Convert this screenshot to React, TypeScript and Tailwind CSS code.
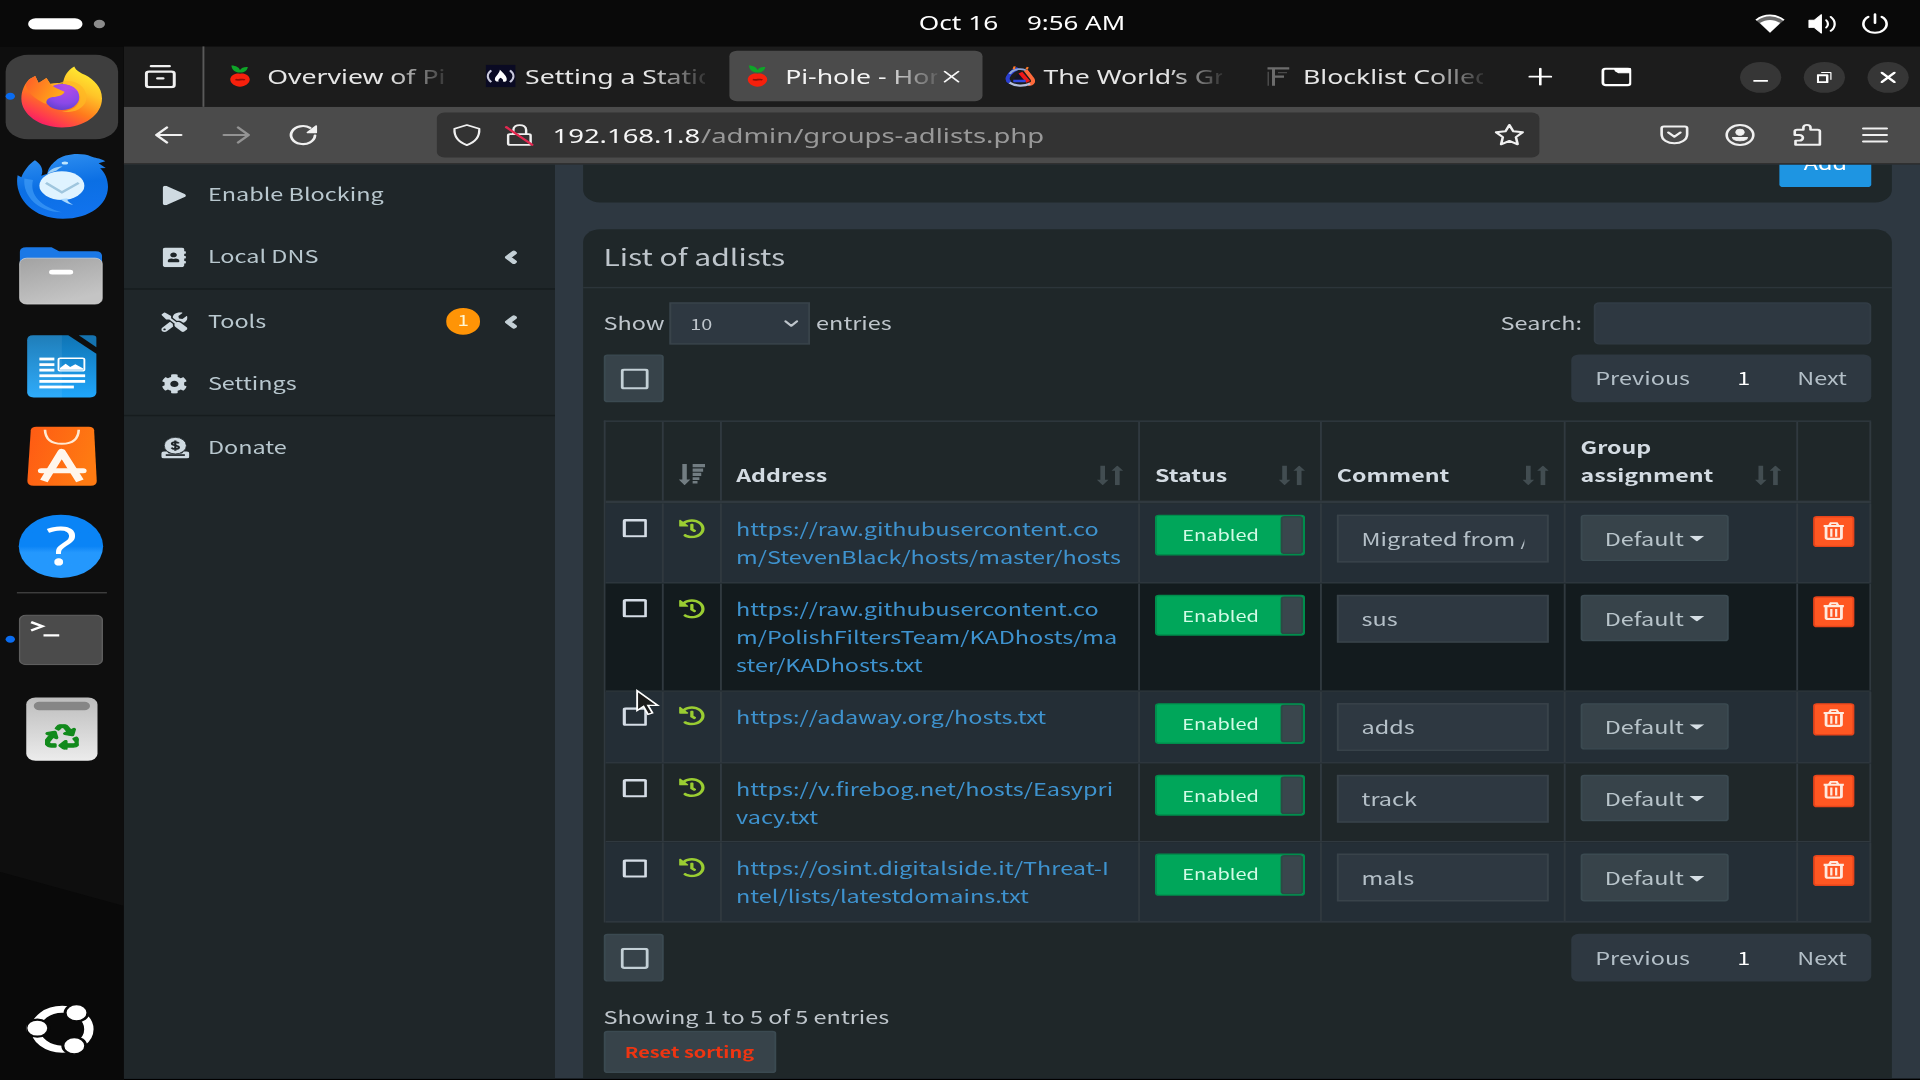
import React, { ReactNode } from "react";
import {
  FaAddressBook,
  FaAngleLeft,
  FaCog,
  FaHistory,
  FaPlay,
  FaRecycle,
  FaTools,
} from "react-icons/fa";

/* ---------- dock icons ---------- */

function Firefox() {
  return (
    <svg viewBox="0 0 44 44" className="h-11 w-11">
      <defs>
        <linearGradient id="ffBody" x1="0.85" y1="0.05" x2="0.25" y2="1">
          <stop offset="0" stopColor="#fff133" />
          <stop offset="0.3" stopColor="#ffc428" />
          <stop offset="0.6" stopColor="#ff7a1c" />
          <stop offset="0.85" stopColor="#ff3a4e" />
          <stop offset="1" stopColor="#f5156c" />
        </linearGradient>
        <linearGradient id="ffHead" x1="0" y1="0" x2="1" y2="0.4">
          <stop offset="0" stopColor="#ff5a2a" />
          <stop offset="1" stopColor="#ffab16" />
        </linearGradient>
        <radialGradient id="ffGlobe" cx="0.6" cy="0.2" r="0.9">
          <stop offset="0" stopColor="#b14be8" />
          <stop offset="0.6" stopColor="#8a48e8" />
          <stop offset="1" stopColor="#5a3ec8" />
        </radialGradient>
      </defs>
      <path
        d="M4.6 9.4 7.8 7 9.6 12 13.8 8.4 15.8 12.6C18 12 20.5 11.8 22.6 12.6 23 7 25 3 28.6.2 29.6 3.4 32 4.6 34.5 6.4 39 9.6 43.4 15 43.4 23 43.4 34.5 34 43.6 22 43.6 10 43.6.4 34.2.4 23.4.4 17.5 2 13 4.6 9.4Z"
        fill="url(#ffBody)"
      />
      <circle cx="22" cy="22" r="9.3" fill="url(#ffGlobe)" />
      <path
        d="M4.6 9.4 7.8 7 9.6 12 13.8 8.4 15.8 12.8C17.2 14.8 20 16.6 23.4 18.2 23.2 20.4 20 21.8 17 22 14.4 22.6 13.4 24.6 13.8 27 10 25 3.6 20 2.6 13Z"
        fill="url(#ffHead)"
      />
      <path
        d="M20 12.4C25 11.8 30.5 14.6 31.8 21 32.4 27 28 32 22 32 29 34.5 35.5 29 35.2 21.5 34.6 13.6 28 9.2 22.8 11Z"
        fill="#ffb824"
        opacity="0.75"
      />
      <path d="M20 13.4C25 12 29 14.5 30.8 18.6 28.6 16.8 26.6 16.4 24.4 16.6 22.8 14.8 21.6 14 20 13.4Z" fill="#b24be6" />
    </svg>
  );
}

function Thunderbird() {
  return (
    <svg viewBox="0 0 50 48" className="h-12 w-[50px]">
      <defs>
        <linearGradient id="tbBody" x1="0.3" y1="0" x2="0.5" y2="1">
          <stop offset="0" stopColor="#2f8ff0" />
          <stop offset="0.5" stopColor="#0b6fe4" />
          <stop offset="1" stopColor="#1173ee" />
        </linearGradient>
      </defs>
      <path
        d="M10.6 5C7.6 7.6 5 12 3.4 17L1.4 15.6C-.6 30 8 46.4 25.5 46.6 40 46.6 49.4 36.5 49.6 24 49.6 18 47.8 13.4 45.4 10.6L48.4 10.4 44.6 7 48.2 5.6C44.6 3 42.8 3.4 40.6 2.2 35.6-.4 26.5-.2 21.6 5.4 19.4 7.8 17.6 10.6 17.2 14.6L14 16C15.6 11.4 13.6 7.6 10.6 5Z"
        fill="url(#tbBody)"
      />
      <path d="M5 18C4 30 12 42 25 42 14 38 7.6 30 9.6 19Z" fill="#3f9bf7" opacity="0.7" />
      <path d="M17.2 14.6C19 11 22 9.4 25.4 9.4 23.4 10.6 23 11.4 22 12.4Z" fill="#9fd0f5" />
      <ellipse cx="26.6" cy="6.9" rx="1.7" ry="1.1" fill="#bfe6ff" />
      <ellipse cx="25" cy="23" rx="12" ry="10.2" fill="#dff3ff" />
      <path d="M24 32.6C27 35 29 36.4 31 36.6 28.4 34.8 27.6 33.4 28 32Z" fill="#a8d8ff" />
      <path d="M16.5 21 25 27.8 34 21" fill="none" stroke="#9fc6de" strokeWidth="1.6" />
    </svg>
  );
}

function Files() {
  return (
    <svg viewBox="0 0 45 42" className="h-[42px] w-[45px]">
      <defs>
        <linearGradient id="flG" x1="0" y1="0" x2="0.4" y2="1">
          <stop offset="0" stopColor="#a2a2a2" />
          <stop offset="1" stopColor="#c4c4c4" />
        </linearGradient>
      </defs>
      <path d="M.6 14V4Q.6.8 4 .8H17.5L21.5 3.6H41Q44.4 3.6 44.4 7V14Z" fill="#1a78e6" />
      <rect x="0.5" y="8.6" width="44" height="32.6" rx="3.8" fill="url(#flG)" stroke="#cfcfcf" strokeWidth="0.5" />
      <rect x="16.2" y="16.8" width="12.8" height="3.4" rx="1.6" fill="#fff" />
    </svg>
  );
}

function Writer() {
  return (
    <svg viewBox="0 0 38 45" className="h-[45px] w-[38px]">
      <defs>
        <linearGradient id="wrG" x1="0" y1="0" x2="0" y2="1">
          <stop offset="0" stopColor="#0f74b4" />
          <stop offset="1" stopColor="#20a6fb" />
        </linearGradient>
      </defs>
      <path d="M3.6 .4H22.4L37.4 13.6V41Q37.4 44.6 34 44.6H4Q.5 44.6.5 41V4Q.5.4 3.6.4Z" fill="url(#wrG)" />
      <path d="M.5 4Q.5.4 3.6.4H19V44.6H4Q.5 44.6.5 41Z" fill="#fff" opacity="0.07" />
      <path d="M28 .4H35.4Q37.4.4 37.4 2.4V9Z" fill="#1573b0" />
      <g fill="#fff">
        <rect x="7" y="16.3" width="8" height="2" />
        <rect x="7" y="20.3" width="8" height="2" />
        <rect x="7" y="24.2" width="8" height="2" />
        <rect x="7" y="28.2" width="24.4" height="2" />
        <rect x="7" y="32.2" width="24.4" height="2" />
        <rect x="7" y="36.2" width="18.4" height="2" />
      </g>
      <rect x="17.2" y="16.7" width="13.8" height="9" rx="1" fill="none" stroke="#fff" strokeWidth="1" />
      <path d="M18 25V23.6L21 20.6 23.4 23 26.2 21 30.4 24V25Z" fill="#fff" />
    </svg>
  );
}

function Store() {
  return (
    <svg viewBox="0 0 38 43" className="h-[43px] w-[38px]">
      <defs>
        <linearGradient id="stG" x1="0" y1="0" x2="1" y2="0.3">
          <stop offset="0" stopColor="#ff5a14" />
          <stop offset="1" stopColor="#fe7a12" />
        </linearGradient>
      </defs>
      <path d="M5.4.5H33.4Q36 .5 36.2 3L37.6 39Q37.6 42.4 34.4 42.4H4Q.6 42.4.6 39L2.4 3Q2.6.5 5.4.5Z" fill="url(#stG)" />
      <path d="M10 2.6C10.2 9.4 13.6 12.6 19 12.6S27.8 9.4 28 2.6" fill="none" stroke="#ffe9d2" strokeWidth="1.4" />
      <g stroke="#fff6ec" fill="none">
        <path d="M9.4 39 18.9 18.4 28.6 39" strokeWidth="4.4" strokeLinejoin="round" />
        <path d="M8 31.8H30.4" strokeWidth="3.6" strokeLinecap="round" />
      </g>
    </svg>
  );
}

function Help() {
  return (
    <div className="flex h-[45px] w-[45px] items-center justify-center rounded-full bg-gradient-to-b from-[#0a84f6] from-50% to-[#2498fd] to-60% font-['Noto_Sans'] text-[38px] leading-none text-white">
      <span className="-mt-0.5">?</span>
    </div>
  );
}

function Terminal() {
  return (
    <svg viewBox="0 0 45 36" className="h-9 w-[45px]">
      <rect x="0.4" y="0.4" width="44.2" height="35.2" rx="3.6" fill="#4b4b4b" stroke="#5e5e5e" strokeWidth="0.8" />
      <path d="M6.6 5.4 12.6 8.4 6.6 11.4" fill="none" stroke="#fff" strokeWidth="1.6" />
      <path d="M13.2 14.8H21.6" stroke="#fff" strokeWidth="1.5" />
    </svg>
  );
}

function Trash() {
  return (
    <div className="flex h-[45px] w-[37.5px] flex-col items-center rounded-[5px] bg-gradient-to-b from-[#bdbdbd] to-[#ececec] pt-[3px] text-[#128a1c]">
      <div className="h-[6px] w-[30.5px] rounded-[3px] bg-[#868686]" />
      <FaRecycle className="mt-[9.6px] size-[18.6px]" stroke="currentColor" strokeWidth={24} />
    </div>
  );
}

function UbuntuLogo() {
  return (
    <svg viewBox="0 0 38 36" className="h-9 w-[38px]">
      <circle cx="19.2" cy="17.9" r="14.2" fill="none" stroke="#fff" strokeWidth="5" />
      <g fill="#fff" stroke="#090909" strokeWidth="1.6">
        <circle cx="5.9" cy="17.1" r="6.1" />
        <circle cx="26.8" cy="6.2" r="6.1" />
        <circle cx="25.6" cy="29.6" r="6.1" />
      </g>
    </svg>
  );
}

/* ---------- browser icons ---------- */

function Line({
  children,
  className = "",
  size = "size-4",
  w = 1.3,
}: {
  children: ReactNode;
  className?: string;
  size?: string;
  w?: number;
}) {
  return (
    <svg
      viewBox="0 0 16 16"
      className={`${size} shrink-0 ${className}`}
      fill="none"
      stroke="currentColor"
      strokeWidth={w}
      strokeLinecap="round"
      strokeLinejoin="round"
    >
      {children}
    </svg>
  );
}

function Berry() {
  return (
    <svg viewBox="0 0 16 16" className="size-4 shrink-0">
      <path d="M8 5.6C5.8 5.8 3.6 4 3.4.6 6 .6 7.6 2.2 8 3.8 8.8 2.2 10 1.4 12.2 1.6 11.8 4.4 10 5.8 8 5.6Z" fill="#0ea528" />
      <path d="M8 6.4C10.6 5.8 13.2 7.8 13.2 10.6 13.2 13.2 10.8 15.6 8 15.6S2.8 13.2 2.8 10.6C2.8 7.8 5.4 5.8 8 6.4Z" fill="#f6200c" />
      <path d="M5.6 10.4C7 11.6 9 9.8 10.6 10.8" fill="none" stroke="#8d0f08" strokeWidth="1.2" />
    </svg>
  );
}

function CodeCamp() {
  return (
    <svg viewBox="0 0 16 16" className="size-4 shrink-0">
      <rect width="16" height="16" fill="#0a0a23" />
      <path d="M3 4C.6 6.6.6 9.8 3 12.4M13 4C15.4 6.6 15.4 9.8 13 12.4" fill="none" stroke="#c9c9dc" strokeWidth="1.2" />
      <path d="M7.6 3.6C9 5.6 11.8 8.4 11.2 11 11 12 10 12.2 9.2 12 9.6 10.6 8.8 9.8 8 9.2 7.2 9.8 6.4 10.8 7 12 5.6 12.2 4.6 11.2 5 9.6 5.4 8 7.4 6 7.6 3.6Z" fill="#fff" />
    </svg>
  );
}

function Swirl() {
  return (
    <svg viewBox="0 0 16 16" className="size-4 shrink-0" fill="none">
      <path d="M8 5 12.4 12H4Z" fill="#14142a" />
      <path d="M2.6 12.6C.2 10.6 1.6 7.2 4.4 4.4L7 2.6" stroke="#2a3fd0" strokeWidth="2.2" />
      <path d="M2.6 6.6C4 3 10 1.4 12.6 5.8" stroke="#8fa6d8" strokeWidth="1.3" />
      <path d="M11 4 14 9C16 12 14.6 14 12.4 14" stroke="#ff6a3a" strokeWidth="2.2" />
      <path d="M8.2 5.6 12.4 12.2" stroke="#f01818" strokeWidth="2.4" />
      <path d="M2.4 12.8C5.6 15.4 10 15.4 13.4 13.6" stroke="#b4bedc" strokeWidth="1.6" />
      <path d="M4.4 11.6H11" stroke="#3048e0" strokeWidth="1.7" />
      <path d="M4.6 3.2 5.2 1.2M11.4 3.4 12.2 1.8" stroke="#ff7a2a" strokeWidth="1.2" />
    </svg>
  );
}

function FilterLists() {
  return (
    <svg viewBox="0 0 16 16" className="size-4 shrink-0" fill="none" stroke="#6c6c6c">
      <path d="M3 2.6H14.6M6.2 2.6V15M6.2 8.4H11.8" strokeWidth="1.6" />
      <path d="M3.4 5V15M8.6 5.6H13.4" strokeWidth="0.8" stroke="#4a4a4a" />
    </svg>
  );
}

function Tab({ icon, title, look }: { icon: ReactNode; title: string; look: string }) {
  return (
    <div className="flex shrink-0 items-center">
      {icon}
      <span
        className={`${look} mt-[1.4px] overflow-hidden text-[14.2px] leading-5 whitespace-nowrap [mask-image:linear-gradient(to_right,black_calc(100%-30px),transparent_calc(100%+4px))]`}
      >
        {title}
      </span>
    </div>
  );
}

function WinButton({ children }: { children: ReactNode }) {
  return <div className="flex size-[22px] items-center justify-center rounded-full bg-[#363636] text-white">{children}</div>;
}

/* ---------- page pieces ---------- */

function SideItem({ icon, label, badge, arrow }: { icon: ReactNode; label: string; badge?: string; arrow?: boolean }) {
  return (
    <div className="flex h-[43.9px] items-center pr-[18px] pl-[20px] text-[#b8c7ce]">
      <span className="flex w-[25.2px] items-center text-[14px] text-[#cfdae1]">{icon}</span>
      <span className="-mt-px flex-1">{label}</span>
      {badge && (
        <span className="mr-[10.6px] flex h-[18.5px] w-[18.4px] items-center justify-center rounded-full bg-[#ff9406] text-[11px] leading-none text-[#fff6d0]">
          <span className="-mt-0.5">{badge}</span>
        </span>
      )}
      {arrow && (
        <span className="flex w-[11px] justify-center text-[#c4d0d6]">
          <FaAngleLeft className="size-[14px]" stroke="currentColor" strokeWidth={30} />
        </span>
      )}
    </div>
  );
}

function DonateIcon() {
  return (
    <svg viewBox="0 0 15 15" className="h-[15px] w-[15px]">
      <path d="M1.4 10H3L4 11.4H11L12 10H13.6Q15 10 15 11.4V13.6Q15 15 13.6 15H1.4Q0 15 0 13.6V11.4Q0 10 1.4 10Z" fill="currentColor" />
      <rect x="2.4" y="12" width="10.2" height="1.2" fill="#1f2629" />
      <circle cx="7.5" cy="5.9" r="5.9" fill="currentColor" stroke="#1f2629" strokeWidth="0.5" />
      <path
        d="M9.4 4.3C9 3.6 8.4 3.4 7.5 3.4 6.4 3.4 5.7 3.9 5.7 4.6 5.7 6.3 9.4 5.3 9.4 7.1 9.4 7.9 8.6 8.4 7.5 8.4 6.5 8.4 5.8 8 5.5 7.3M7.5 2.2V9.6"
        fill="none"
        stroke="#1f2629"
        strokeWidth="1.2"
      />
    </svg>
  );
}

function SelectAll() {
  return (
    <div className="flex h-[33.5px] w-[32.6px] items-center justify-center rounded-[2px] border border-[#3b4a51] bg-[#37434a]">
      <svg viewBox="0 0 15 15" className="size-[15px]">
        <rect x="0.8" y="0.8" width="13.4" height="13.4" rx="1.2" fill="none" stroke="#c3d0d6" strokeWidth="1.6" />
      </svg>
    </div>
  );
}

function Pagination() {
  return (
    <div className="flex h-[33.5px] w-[160px] items-center rounded-[4px] bg-[#2e3841] text-[#b3bfc7]">
      <span className="-mt-[0.3px] w-[76px] pl-[12.8px]">Previous</span>
      <span className="-mt-[0.3px] w-[32px] text-center text-white">1</span>
      <span className="-mt-[0.3px] pl-[12.5px]">Next</span>
    </div>
  );
}

function SortArrows() {
  return (
    <svg viewBox="0 0 14 14" className="mb-[3.6px] size-[14px] shrink-0 text-[#424d51]">
      <path d="M3.1 0V11M10.9 14V3" stroke="currentColor" strokeWidth="2.5" />
      <path d="M0 10.2H6.2L3.1 14ZM7.8 3.8H14L10.9 0Z" fill="currentColor" />
    </svg>
  );
}

function SortDescending() {
  return (
    <svg viewBox="0 0 14 15" className="h-[15px] w-[14px] text-[#727d82]" fill="currentColor">
      <path d="M1.9 0H4.3V11H6.2L3.1 15 0 11H1.9Z" />
      <path d="M7.4 0H14V2.3H7.4ZM7.4 3.1H13V5.4H7.4ZM7.4 6.2H12V8.5H7.4ZM7.4 9.3H11V11.3H7.4ZM7.4 12H10V13.8H7.4Z" />
    </svg>
  );
}

function HeadCell({ title }: { title: string }) {
  return (
    <div className="flex items-end justify-between border-r border-[#30393f] pr-[8.4px] pb-[7.3px] pl-[7.8px]">
      <span className="w-20 text-[12.37px]">{title}</span>
      <SortArrows />
    </div>
  );
}

function Toggle() {
  return (
    <div className="flex h-[29.5px] w-[79.8px] items-stretch overflow-hidden rounded-[2px] border border-[#008d4c] bg-[#00a65a]">
      <span className="mt-[3px] flex-1 pl-[13.4px] text-[10.65px] leading-[21px] text-[#d2fbe6]">Enabled</span>
      <span className="w-[11.5px] rounded-[2px] border border-[#2b4a45] bg-[#3a464d]" />
    </div>
  );
}

function TrashButton() {
  return (
    <div className="flex h-[22.3px] w-[22.6px] justify-center rounded-[2px] border border-[#e8441b] bg-[#ff5722] pt-[3px]">
      <svg viewBox="0 0 12 13" className="h-[13px] w-3" fill="none" stroke="#ffeadf">
        <path d="M.6 3H11.4" strokeWidth="1.5" />
        <path d="M3.6 2.8 4.4 1H7.6L8.4 2.8" strokeWidth="1.3" />
        <path d="M1.9 3V11.2Q1.9 12.2 2.9 12.2H9.1Q10.1 12.2 10.1 11.2V3" strokeWidth="1.5" />
        <path d="M4.7 5V10.6M7.3 5V10.6" strokeWidth="1.2" />
      </svg>
    </div>
  );
}

const cell = "border-r border-[#30393f] px-[8px] pt-[8px]";

const rows = [
  { url: ["https://raw.githubusercontent.co", "m/StevenBlack/hosts/master/hosts"], comment: "Migrated from /etc", look: "h-[57px] bg-[#242e36]" },
  { url: ["https://raw.githubusercontent.co", "m/PolishFiltersTeam/KADhosts/ma", "ster/KADhosts.txt"], comment: "sus", look: "h-[76.8px] bg-[#131b1e]" },
  { url: ["https://adaway.org/hosts.txt"], comment: "adds", look: "h-[51px] bg-[#242e36]" },
  { url: ["https://v.firebog.net/hosts/Easypri", "vacy.txt"], comment: "track", look: "h-[56.8px] bg-[#1f2729]" },
  { url: ["https://osint.digitalside.it/Threat-I", "ntel/lists/latestdomains.txt"], comment: "mals", look: "h-[56.8px] bg-[#242e36]" },
];

const grid = "grid grid-cols-[31px_31px_223.3px_97px_130px_124px_39px]";

function AdlistTable() {
  return (
    <div className="w-[676.3px] border-t border-l border-[#30393f]">
      <div className={`${grid} h-[57.6px] border-b-2 border-[#30393f] font-bold leading-5 text-[#d3dbe2]`}>
        <div className="border-r border-[#30393f]" />
        <div className="flex items-end justify-center border-r border-[#30393f] pb-[10.6px]">
          <SortDescending />
        </div>
        <HeadCell title="Address" />
        <HeadCell title="Status" />
        <HeadCell title="Comment" />
        <HeadCell title="Group assignment" />
        <div className="border-r border-[#30393f]" />
      </div>
      {rows.map((r) => (
        <div key={r.url.join("")} className={`${grid} ${r.look} border-b border-[#30393f]`}>
          <div className={`${cell} pt-[11.2px]! pl-[9px]!`}>
            <svg viewBox="0 0 13.4 13.4" className="size-[13.4px]">
              <rect x="0.9" y="0.9" width="11.6" height="11.6" rx="0.9" fill="none" stroke="#d5dde6" strokeWidth="1.8" />
            </svg>
          </div>
          <div className={`${cell} flex justify-center pt-[10.8px]!`}>
            <FaHistory className="size-[14px] text-[#9acd32]" />
          </div>
          <div className={`${cell} pl-[7.7px]! leading-5 whitespace-nowrap text-[#3e93cf]`}>
            {r.url.map((line) => (
              <div key={line}>{line}</div>
            ))}
          </div>
          <div className={cell}>
            <Toggle />
          </div>
          <div className={cell}>
            <div className="h-[34px] w-[113px] border border-[#39434a] bg-[#2e3841] px-3 text-[#b5c0c8]">
              <div className="mt-[5px] w-[87px] overflow-hidden leading-[22px] whitespace-nowrap">{r.comment}</div>
            </div>
          </div>
          <div className={cell}>
            <div className="flex h-[33.5px] w-[79px] items-center rounded-[2px] border border-[#3b4a51] bg-[#37434a] pl-[11.7px] text-[#b8c4ca]">
              <span className="mt-[0.8px]">Default</span>
              <svg viewBox="0 0 8 4" className="mt-[1.4px] ml-[2.6px] h-1 w-2">
                <path d="M0 0H8L4 4Z" fill="#d6dfe5" />
              </svg>
            </div>
          </div>
          <div className={`${cell} pt-[8.8px]! pl-[7.5px]!`}>
            <TrashButton />
          </div>
        </div>
      ))}
    </div>
  );
}

function DockSlot({ children, running, active }: { children: ReactNode; running?: boolean; active?: boolean }) {
  return (
    <div className="relative flex h-[63.9px] w-full shrink-0 items-center justify-center">
      <div className={active ? "flex size-[60px] items-center justify-center rounded-[12px] bg-[#3e3e3e]" : ""}>{children}</div>
      {running && <div className="absolute top-[29px] left-[2.8px] size-[5.6px] rounded-full bg-[#0a6cf0]" />}
    </div>
  );
}

export default function App() {
  return (
    <div className="h-[1080px] w-[1920px] overflow-hidden bg-black">
      {/* 4:3 desktop stretched over the full widescreen frame */}
      <div className="relative flex h-[768px] w-[1024px] origin-top-left scale-x-[1.875] scale-y-[1.40625] flex-col bg-black font-['Noto_Sans',sans-serif] text-white">
        <div className="flex h-[32.5px] shrink-0 items-center bg-[#090909]">
          <div className="flex w-[490px] items-center gap-[5.8px] pt-[1.4px] pl-[14.6px]">
            <div className="h-[8.8px] w-[29.4px] rounded-full bg-white" />
            <div className="size-[6.4px] rounded-full bg-[#8c8c8c]" />
          </div>
          <div className="flex gap-[15.4px] text-[14px] leading-5">
            <span>Oct 16</span>
            <span className="text-[13.8px]">9:56 AM</span>
          </div>
          <div className="flex flex-1 items-center justify-end gap-[12px] pt-[1.4px] pr-[16.4px]">
            <svg viewBox="0 0 16 14" className="h-3.5 w-4">
              <path d="M.6 4.4C5-.2 11-.2 15.4 4.4L8 13.2Z" fill="#6a6a6a" />
              <path d="M.6 4.4C5-.2 11-.2 15.4 4.4" fill="none" stroke="#fff" strokeWidth="1.2" />
              <path d="M2.6 6.4C6 3.4 10 3.4 13.4 6.4L8 13.2Z" fill="#fff" />
            </svg>
            <Line w={1.2}>
              <path d="M.8 5.4H3.6L7.4 1.4V14.6L3.6 10.6H.8Z" fill="currentColor" strokeWidth={0.6} />
              <path d="M10 5.4C11.2 6.8 11.2 9.2 10 10.6M12.4 3C15.2 5.8 15.2 10.2 12.4 13" />
            </Line>
            <Line w={1.4}>
              <path d="M8 1.2V7.4M4.4 3A6.2 6.2 0 1 0 11.6 3" />
            </Line>
          </div>
        </div>

        <div className="flex min-h-0 flex-1">
          <aside className="relative flex w-[65.7px] shrink-0 flex-col items-center bg-[#0e0e0e] pt-[4.2px]">
            <div className="absolute bottom-0 left-0 h-[148px] w-full bg-[#090909] [clip-path:polygon(0_0,100%_24px,100%_100%,0_100%)]" />
            <DockSlot running active>
              <Firefox />
            </DockSlot>
            <DockSlot>
              <div className="pt-[1px]">
                <Thunderbird />
              </div>
            </DockSlot>
            <DockSlot>
              <Files />
            </DockSlot>
            <DockSlot>
              <Writer />
            </DockSlot>
            <DockSlot>
              <Store />
            </DockSlot>
            <DockSlot>
              <Help />
            </DockSlot>
            <div className="mt-[0.8px] mb-[0.8px] h-px w-[48.5px] shrink-0 bg-[#3f3f3f]" />
            <DockSlot running>
              <Terminal />
            </DockSlot>
            <DockSlot>
              <Trash />
            </DockSlot>
            <div className="relative mt-auto mb-[18.3px]">
              <UbuntuLogo />
            </div>
          </aside>

          <main className="flex min-w-0 flex-1 flex-col">
            {/* tab strip */}
            <div className="flex h-[43.9px] shrink-0 items-center bg-[#1c1c1c] text-[#e6e6e6]">
              <div className="flex h-full w-[42.9px] items-center justify-end border-r border-[#5a5a5a] pt-[0.9px] pr-[13.2px] text-[#f0f0f0]">
                <Line size="size-[17px]" w={1.5}>
                  <path d="M3.4 1H12.6M2.4 4.6H13.6Q15 4.6 15 6V13.6Q15 15 13.6 15H2.4Q1 15 1 13.6V6Q1 4.6 2.4 4.6ZM6.6 9.2H9.4" />
                </Line>
              </div>
              <div className="flex items-center pl-[11.6px]">
                <Tab icon={<Berry />} title="Overview of Pi-hole" look="w-[101.4px] pl-[6.4px]" />
                <div className="ml-[21px]">
                  <Tab icon={<CodeCamp />} title="Setting a Static IP" look="w-[101px] pl-[5.5px]" />
                </div>
                <div className="ml-[13px] flex h-[36px] w-[135px] items-center rounded-[4px] bg-[#4b4b4b] pl-[7.8px] text-[#f4f4f4]">
                  <Tab icon={<Berry />} title="Pi-hole - Home" look="w-[88px] pl-[6.4px]" />
                  <Line className="ml-[3px]" size="size-[9px]" w={2}>
                    <path d="M1.5 1.5 14.5 14.5M14.5 1.5 1.5 14.5" />
                  </Line>
                </div>
                <div className="ml-[12px]">
                  <Tab icon={<Swirl />} title="The World’s Greatest" look="w-[100px] pl-[5px]" />
                </div>
                <div className="ml-[21.6px]">
                  <Tab icon={<FilterLists />} title="Blocklist Collection" look="w-[102px] pl-[5.8px]" />
                </div>
              </div>
              <div className="flex flex-1 items-center pt-[0.8px] text-white">
                <Line className="ml-[24.3px]" size="size-[13px]" w={1.7}>
                  <path d="M8 1V15M1 8H15" />
                </Line>
                <svg viewBox="0 0 16 13" className="ml-[25.4px] h-[13.4px] w-[16.5px]" fill="none" stroke="currentColor" strokeWidth="1.5">
                  <rect x="0.8" y="0.8" width="14.4" height="11.4" rx="1.6" />
                  <path d="M7 1H15V3.6H9L7.4 2.4Z" fill="currentColor" strokeWidth="0.8" />
                </svg>
                <div className="ml-auto flex gap-[12px] pr-[6px]">
                  <WinButton>
                    <Line className="mt-[2px]" size="size-2">
                      <path d="M1 11H15" strokeWidth={2.4} />
                    </Line>
                  </WinButton>
                  <WinButton>
                    <Line size="size-2" w={2.2}>
                      <path d="M1 5H11V15H1Z" strokeWidth={2.6} />
                      <path d="M5 1H15V11" strokeWidth={1.4} />
                    </Line>
                  </WinButton>
                  <WinButton>
                    <Line size="size-2" w={3}>
                      <path d="M1 1 15 15M15 1 1 15" />
                    </Line>
                  </WinButton>
                </div>
              </div>
            </div>

            {/* navigation bar */}
            <div className="flex h-[40.5px] shrink-0 items-center border-b border-[#2d2d2d] bg-[#4b4b4b] text-[#f0f0f0]">
              <Line className="ml-[16.3px]" w={1.5}>
                <path d="M1.4 8H14.6M7 2.6 1.4 8 7 13.4" />
              </Line>
              <Line className="ml-[19.7px] text-[#939393]" w={1.5}>
                <path d="M1.4 8H14.6M9 2.6 14.6 8 9 13.4" />
              </Line>
              <Line className="ml-[20px]" w={1.5}>
                <path d="M14 8.4A6.4 6.4 0 1 1 11.4 2.9" />
                <path d="M10 6.2H14.6V1.6Z" fill="currentColor" strokeWidth={1} />
              </Line>
              <div className="ml-[63.6px] flex h-[31.8px] w-[587.6px] shrink-0 items-center rounded-[4px] bg-[#333]">
                <Line className="ml-[7.8px]" w={1.2}>
                  <path d="M8 .9 14.6 3.6C14.9 9 12.6 13 8 15.2 3.4 13 1.1 9 1.4 3.6Z" />
                </Line>
                <Line className="ml-[12px]" w={1.3}>
                  <path d="M3 7.4H13Q14 7.4 14 8.4V14Q14 15 13 15H3Q2 15 2 14V8.4Q2 7.4 3 7.4ZM4.8 7V4.4C4.8 -.2 11.6 -.2 11.6 4.4V7" />
                  <path d="M1 2.4 14.8 15" stroke="#e22850" strokeWidth={1.5} />
                </Line>
                <span className="ml-[9.6px] text-[14.65px] leading-5 whitespace-nowrap text-[#f6f6f6]">
                  192.168.1.8<span className="ml-[0.4px] text-[14.65px] text-[#999]">/admin/groups-adlists.php</span>
                </span>
                <Line className="mr-[8px] ml-auto" w={1.4}>
                  <path d="M8 .9 10.1 5.4 15.1 6 11.5 9.5 12.4 14.6 8 12.2 3.6 14.6 4.5 9.5.9 6 5.9 5.4Z" />
                </Line>
              </div>
              <div className="mr-[16px] ml-auto flex items-center gap-[19.8px]">
                <Line w={1.4}>
                  <path d="M2.4 2H13.6Q14.8 2 14.8 3.2V7.4C14.8 16 1.2 16 1.2 7.4V3.2Q1.2 2 2.4 2ZM4.8 6.2 8 9.2 11.2 6.2" />
                </Line>
                <Line w={1.4}>
                  <circle cx="8" cy="8" r="7.1" />
                  <circle cx="8" cy="6" r="2.2" fill="currentColor" strokeWidth={0.6} />
                  <path d="M4 9.8H12C11.4 13 4.6 13 4 9.8Z" fill="currentColor" strokeWidth={0.6} />
                </Line>
                <Line w={1.4}>
                  <path d="M1.2 5.4Q1.2 4.2 2.4 4.2H5.8V2.6C5.8 .2 9.6 .2 9.6 2.6V4.2H13.4Q14.6 4.2 14.6 5.4V15H1.6V12H3.6C6.2 12 6.2 8 3.6 8H1.2Z" />
                </Line>
                <Line w={1.5}>
                  <path d="M1.8 3.4H14.2M1.8 8H14.2M1.8 12.6H14.2" />
                </Line>
              </div>
            </div>

            {/* web page */}
            <div className="flex min-h-0 flex-1 overflow-hidden border-b border-black bg-[#2e3841] font-['Noto_Sans_CJK_SC',sans-serif] text-[12.5px] leading-5 text-[#bec5cb]">
              <nav className="w-[230.2px] shrink-0 bg-[#1f2629]">
                <SideItem icon={<FaPlay />} label="Enable Blocking" />
                <SideItem icon={<FaAddressBook />} label="Local DNS" arrow />
                <div className="my-[0.5px] h-px bg-[#161c1e]" />
                <SideItem icon={<FaTools />} label="Tools" badge="1" arrow />
                <SideItem icon={<FaCog />} label="Settings" />
                <div className="my-[0.5px] h-px bg-[#161c1e]" />
                <SideItem icon={<DonateIcon />} label="Donate" />
              </nav>

              <section className="flex min-w-0 flex-1 flex-col px-[15px]">
                <div className="flex h-[26.8px] shrink-0 items-start justify-end overflow-hidden rounded-b-[9px] bg-[#1f2729] pr-[11px]">
                  <div className="-mt-[18px] flex h-[34px] w-[49px] items-center justify-center rounded-[2px] bg-[#1e95e2] text-white">
                    Add
                  </div>
                </div>
                <div className="mt-[19.8px] flex-1 rounded-t-[9px] bg-[#1f2729]">
                  <div className="h-[41.6px] border-b border-[#2c353a] px-[11px] pt-[7px] text-[16.05px] leading-[24px]">List of adlists</div>
                  <div className="px-[11px] pt-[10.3px]">
                    <div className="flex h-[30px] items-center">
                      <span className="-mt-px">Show</span>
                      <div className="ml-[2.2px] flex h-[30px] w-[75px] items-center justify-between border border-[#39434a] bg-[#2e3841] pr-[5px] pl-[10.5px] text-[10.6px]">
                        <span className="mt-[0.3px]">10</span>
                        <Line size="size-2" w={2.8}>
                          <path d="M2 5 8 11.4 14 5" />
                        </Line>
                      </div>
                      <span className="-mt-px ml-[3.6px]">entries</span>
                      <span className="-mt-px mr-[6px] ml-auto">Search:</span>
                      <div className="h-[30px] w-[148.3px] rounded-[3px] border border-[#323c45] bg-[#2e3841]" />
                    </div>
                    <div className="mt-[7.1px] flex justify-between">
                      <SelectAll />
                      <Pagination />
                    </div>
                    <div className="mt-[13.2px]">
                      <AdlistTable />
                    </div>
                    <div className="mt-[8.2px] flex justify-between">
                      <SelectAll />
                      <Pagination />
                    </div>
                    <div className="mt-[15px]">Showing 1 to 5 of 5 entries</div>
                    <div className="mt-[0.5px] flex h-[29.3px] w-[91.7px] items-center justify-center rounded-[2px] border border-[#3b4a51] bg-[#37434a] text-[10.65px] font-bold text-[#ee3512]">
                      Reset sorting
                    </div>
                  </div>
                </div>
              </section>
            </div>
          </main>
        </div>

        {/* mouse pointer */}
        <svg viewBox="0 0 13 19" className="absolute top-[489.8px] left-[338.6px] h-[19px] w-[13px]">
          <path d="M.8 1.2V15.2L4.2 12.4 6.6 18 9 17 6.6 11.6H11.8Z" fill="#1c1c1c" stroke="#fff" strokeWidth="1" />
        </svg>
      </div>
    </div>
  );
}
